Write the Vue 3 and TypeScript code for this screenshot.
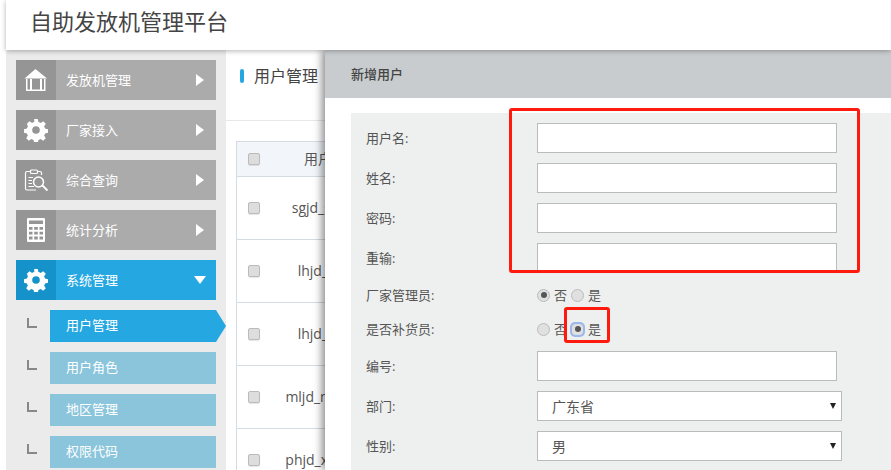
<script setup lang="ts">
interface NavItem { label: string; icon: string; open?: boolean }
const nav: NavItem[] = [
  { label: '发放机管理', icon: 'home' },
  { label: '厂家接入', icon: 'gear' },
  { label: '综合查询', icon: 'search' },
  { label: '统计分析', icon: 'calc' },
  { label: '系统管理', icon: 'gear', open: true },
]
const subs = ['用户管理', '用户角色', '地区管理', '权限代码']
const rows = ['sgjd_sgjdg', 'lhjd_lhjd', 'lhjd_lhjd', 'mljd_mljdxh', 'phjd_xphjdx']
const textFields = ['用户名:', '姓名:', '密码:', '重输:']
const gearPath = 'M10.2 1h3.6l.6 3a8.2 8.2 0 0 1 2.2.9l2.6-1.7 2.6 2.6-1.7 2.6c.4.7.7 1.4.9 2.2l3 .6v3.6l-3 .6a8.2 8.2 0 0 1-.9 2.2l1.7 2.6-2.6 2.6-2.6-1.7c-.7.4-1.4.7-2.2.9l-.6 3h-3.6l-.6-3a8.2 8.2 0 0 1-2.2-.9l-2.6 1.7-2.6-2.6 1.7-2.6a8.2 8.2 0 0 1-.9-2.2l-3-.6v-3.6l3-.6c.2-.8.5-1.5.9-2.2L2.9 5.800l2.600-2.600 2.600 1.700c.7-.4 1.400-.7 2.200-.9zM12 8.200a3.800 3.800 0 1 0 0 7.600 3.800 3.800 0 0 0 0-7.600z'
</script>

<template>
  <div class="page">
    <header class="top"><h1>自助发放机管理平台</h1></header>
    <div class="body">
      <aside class="side">
        <div v-for="n in nav" :key="n.label" class="nav" :class="{ open: n.open }">
          <span class="ico">
            <svg v-if="n.icon === 'home'" width="24" height="24" viewBox="0 0 24 24">
              <path d="M11.500 1 L23 10.500 H0.500 Z" fill="#fff" />
              <path d="M2 11 H3.500 V21.500 H6 V11 H8 V21.500 H16 V11 H18 V21.500 H20 V11 H21.500 V23 H2 Z" fill="#fff" />
            </svg>
            <svg v-else-if="n.icon === 'gear'" width="24" height="24" viewBox="0 0 24 24">
              <path :d="gearPath" fill="#fff" fill-rule="evenodd" />
            </svg>
            <svg v-else-if="n.icon === 'search'" width="24" height="24" viewBox="0 0 24 24" fill="none" stroke="#fff" stroke-width="1.200">
              <path d="M7 3.500 H3 Q1.500 3.500 1.500 5 V20.500 Q1.500 22 3 22 H12 M14 3.500 H16 Q17.500 3.500 17.500 5 V7" />
              <rect x="6.500" y="2" width="7" height="3.500" rx="1" />
              <path d="M4.500 9.500 H9 M4.500 12.500 H8 M4.500 15.500 H8 M4.500 18.500 H10" />
              <circle cx="14.500" cy="14" r="5" stroke-width="1.500" />
              <path d="M18.500 17.500 L23.500 22.500" stroke-width="1.800" />
            </svg>
            <svg v-else width="24" height="24" viewBox="0 0 24 24">
              <path d="M4 0 H20 Q21 0 21 1 V23 Q21 24 20 24 H4 Q3 24 3 23 V1 Q3 0 4 0 Z M5 2.500 V6 H19 V2.500 Z" fill="#fff" fill-rule="evenodd" />
              <path d="M5 9 H8.500 V11.800 H5 Z M10.200 9 H13.800 V11.800 H10.200 Z M15.500 9 H19 V11.800 H15.500 Z M5 13.800 H8.500 V16.600 H5 Z M10.200 13.800 H13.800 V16.600 H10.200 Z M15.500 13.800 H19 V16.600 H15.500 Z M5 18.600 H8.500 V21.400 H5 Z M10.200 18.600 H13.800 V21.400 H10.200 Z M15.500 18.600 H19 V21.400 H15.500 Z" fill="#959595" />
            </svg>
          </span>
          <span class="lbl">{{ n.label }}</span>
          <i class="caret" />
        </div>
        <div v-for="(s, i) in subs" :key="s" class="sub" :class="{ cur: i === 0 }">
          <i class="elbow" />
          <span class="sub-lbl">{{ s }}</span>
        </div>
      </aside>

      <main class="main">
        <div class="title"><i class="mark" /><span>用户管理</span></div>
        <table class="tbl">
          <thead>
            <tr><th class="c0"><i class="chk" /></th><th class="c1">用户名</th><th /></tr>
          </thead>
          <tbody>
            <tr v-for="(r, i) in rows" :key="i">
              <td class="c0"><i class="chk" /></td><td class="c1">{{ r }}</td><td />
            </tr>
          </tbody>
        </table>
      </main>
    </div>

    <section class="modal">
      <div class="m-head">新增用户</div>
      <form class="panel">
        <div v-for="f in textFields" :key="f" class="row">
          <label>{{ f }}</label><input type="text" />
        </div>
        <div class="row radio-row">
          <label>厂家管理员:</label>
          <span class="rd on" /><span class="rt">否</span>
          <span class="rd" /><span class="rt">是</span>
        </div>
        <div class="row radio-row">
          <label>是否补货员:</label>
          <span class="rd" /><span class="rt">否</span>
          <span class="rd on focus" /><span class="rt">是</span>
        </div>
        <div class="row"><label>编号:</label><input type="text" /></div>
        <div class="row">
          <label>部门:</label>
          <div class="sel"><select><option>广东省</option></select></div>
        </div>
        <div class="row">
          <label>性别:</label>
          <div class="sel"><select><option>男</option></select></div>
        </div>
      </form>
    </section>

    <div class="note note-a" />
    <div class="note note-b" />
  </div>
</template>

<style>
html, body { margin: 0; background: #fff; }
</style>

<style scoped>
.page {
  position: relative;
  box-sizing: border-box;
  width: 891px;
  height: 470px;
  padding-left: 6px;
  overflow: hidden;
  background: #fff;
  color: #555;
  font-family: "Open Sans", "Noto Sans CJK SC", sans-serif;
  font-size: 14px;
}
.top {
  position: relative;
  z-index: 3;
  height: 50px;
  background: #fff;
  box-shadow: 0 1px 5px rgba(0, 0, 0, .3);
}
.top h1 {
  margin: 0;
  padding-left: 24px;
  font-size: 22px;
  font-weight: 400;
  line-height: 42px;
  color: #444;
}
.body { display: flex; height: 420px; }
.side {
  flex: none;
  box-sizing: border-box;
  width: 220px;
  padding: 10px 10px 0;
  background: #ebebeb;
}
.nav {
  display: flex;
  align-items: center;
  height: 40px;
  margin-bottom: 10px;
  background: #ababab;
  color: #fff;
}
.ico {
  flex: none;
  display: flex;
  align-items: center;
  justify-content: center;
  width: 40px;
  height: 40px;
  background: #959595;
}
.lbl { flex: 1; padding: 0 0 2px 10px; font-size: 13px; }
.caret {
  width: 0;
  height: 0;
  margin-right: 12px;
  border-style: solid;
  border-width: 6px 0 6px 8px;
  border-color: transparent transparent transparent #fff;
}
.open { background: #25a7e2; }
.open .ico { background: #1592c9; }
.open .caret {
  margin-right: 10px;
  border-width: 8px 6px 0;
  border-color: #fff transparent transparent;
}
.sub {
  position: relative;
  display: flex;
  align-items: center;
  height: 32px;
  margin-bottom: 10px;
}
.elbow {
  flex: none;
  box-sizing: border-box;
  width: 10px;
  height: 10px;
  margin: 0 13px 0 11px;
  border-left: 2px solid #888;
  border-bottom: 2px solid #888;
  transform: translateY(-3px);
}
.sub-lbl {
  flex: 1;
  height: 32px;
  padding-left: 16px;
  line-height: 30px;
  font-size: 13px;
  background: #8ac5dc;
  color: #fff;
}
.cur .sub-lbl { background: #25a7e2; }
.cur::after {
  content: "";
  position: absolute;
  left: 100%;
  top: 0;
  border-style: solid;
  border-width: 16px 0 16px 10px;
  border-color: transparent transparent transparent #25a7e2;
}
.main { flex: 1; min-width: 0; overflow: hidden; }
.title {
  display: flex;
  align-items: center;
  gap: 10px;
  box-sizing: border-box;
  height: 71px;
  padding: 0 0 21px 14px;
  border-bottom: 1px solid #e6e9ec;
  color: #444;
  font-size: 16px;
}
.mark { width: 4px; height: 14px; border-radius: 2px; background: #25a7e2; transform: translateY(1px); }
.tbl {
  width: 650px;
  margin: 20px 0 0 10px;
  border-collapse: collapse;
  table-layout: fixed;
}
.tbl th, .tbl td {
  padding: 0 0 2px;
  border: 1px solid #d5dbe3;
  border-width: 1px 0;
  font-size: 13px;
  font-weight: 400;
  text-align: center;
}
.tbl .c1 { font-size: 14px; }
.tbl .c0 { border-left: 1px solid #d5dbe3; }
.tbl th { height: 32px; background: #f2f6fa; }
.tbl td { height: 60px; }
.c0 { width: 24px; text-align: left !important; padding-left: 11px !important; }
.c1 { width: 106px; }
.chk {
  display: block;
  box-sizing: border-box;
  width: 12px;
  height: 12px;
  margin-top: 2px;
  border: 1px solid #bbb;
  border-radius: 2px;
  background: #ddd;
  box-shadow: 0 1px 1px rgba(0, 0, 0, .1);
}
.modal {
  position: absolute;
  z-index: 2;
  left: 325px;
  top: 50px;
  width: 566px;
  height: 420px;
  background: #fff;
  box-shadow: -3px 0 8px rgba(0, 0, 0, .45);
}
.m-head {
  height: 48px;
  padding-left: 26px;
  background: #c8ccce;
  color: #444;
  font-size: 13px;
  font-weight: 500;
  line-height: 49px;
}
.panel {
  box-sizing: border-box;
  height: 357px;
  margin: 15px 0 0 26px;
  padding-top: 10px;
  background: #eef0ef;
}
.row { display: flex; align-items: center; margin-bottom: 10px; }
.row label { flex: none; box-sizing: content-box; width: 171px; padding: 0 0 2px 15px; font-size: 13px; color: #555; }
.row input {
  box-sizing: border-box;
  width: 300px;
  height: 30px;
  border: 1px solid #bbb;
  border-radius: 0;
  background: #fff;
  outline: none;
}
.radio-row { height: 24px; font-size: 13px; color: #555; }
.rd {
  position: relative;
  flex: none;
  box-sizing: border-box;
  width: 13px;
  height: 13px;
  border: 1px solid #bbb;
  border-radius: 50%;
  background: #e0e0e0;
}
.rd.on::after {
  content: "";
  position: absolute;
  left: 2.500px;
  top: 2.500px;
  width: 6px;
  height: 6px;
  border-radius: 50%;
  background: #555;
}
.rd.focus { outline: 2px solid #9ab8ee; outline-offset: -1px; border-radius: 4px; }
.rt { width: 21px; padding: 0 0 2px 4px; box-sizing: border-box; }
.sel { position: relative; width: 305px; height: 30px; }
.sel::after {
  content: "";
  position: absolute;
  right: 6px;
  top: 12px;
  border-style: solid;
  border-width: 6px 3px 0;
  border-color: #222 transparent transparent;
}
.sel select {
  display: block;
  box-sizing: border-box;
  width: 100%;
  height: 30px;
  padding-left: 14px;
  border: 1px solid #bbb;
  border-radius: 0;
  appearance: none;
  background: #fff;
  color: #555;
  font: inherit;
  outline: none;
}
.note {
  position: absolute;
  z-index: 4;
  box-sizing: border-box;
  border: 3px solid #ff1a0e;
  border-radius: 3px;
  pointer-events: none;
}
.note-a { left: 509px; top: 108px; width: 351px; height: 165px; }
.note-b { left: 564px; top: 307px; width: 46px; height: 36px; }
</style>
